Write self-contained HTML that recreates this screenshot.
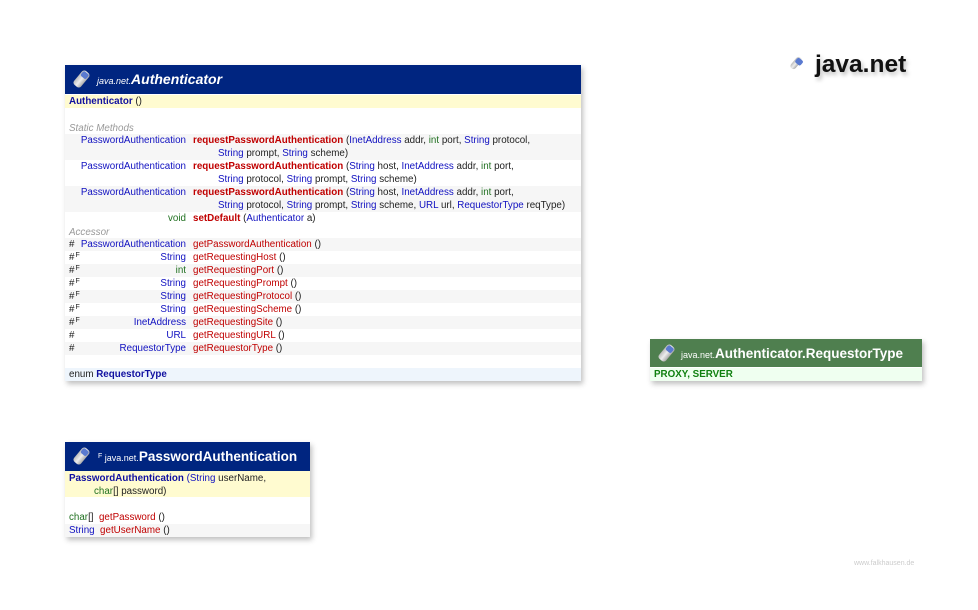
<!DOCTYPE html>
<html><head><meta charset="utf-8"><style>
body{margin:0;width:978px;height:610px;background:#fff;position:relative;overflow:hidden;font-family:"Liberation Sans",sans-serif;font-size:9.8px;color:#222}
.box{position:absolute;background:#fff;box-shadow:2px 3px 5px rgba(0,0,0,.25)}
.hd{position:absolute;left:0;right:0;top:0;color:#fff}
.r{position:absolute;left:0;right:0;height:13px;line-height:13px;white-space:nowrap}
.t{position:absolute;white-space:nowrap;line-height:13px}
.b{color:#1010c0}.g{color:#207020}.m{color:#c00000}.mb{color:#c00000;font-weight:bold}
.k{color:#1010a0;font-weight:bold}
.lab{color:#999;font-style:italic}
.gr{background:#f6f6f6}
.f{font-size:7px;position:relative;top:-3px;margin-left:1px}
.ic{position:absolute;width:9px;height:18px;border-radius:3px;background:linear-gradient(90deg,#bbb,#eee,#aaa);transform:rotate(40deg)}
.ic:after{content:"";position:absolute;left:1px;top:1px;width:7px;height:6px;border-radius:2px;background:#5a7ad0}
</style></head><body>

<div style="position:absolute;left:793px;top:56px;"><div class="ic" style="left:0;top:0;width:6px;height:14px"></div></div>
<div style="position:absolute;left:815px;top:51px;font-size:24.5px;font-weight:bold;color:#111;text-shadow:2px 3px 4px rgba(0,0,0,.25)">java.net</div>

<!-- Authenticator -->
<div class="box" style="left:65px;top:65px;width:516px;height:316px">
 <div class="hd" style="height:29px;background:#002580">
  <div class="ic" style="left:12px;top:5px"></div>
  <div class="t" style="left:32px;top:8px;font-style:italic;font-size:9px">java.net.<span style="font-size:14px;font-weight:bold">Authenticator</span></div>
 </div>
 <div class="r" style="top:30px;background:#fffbd0;padding-left:4px"><span class="k">Authenticator</span> ()</div>
 <div class="r lab" style="top:57px;padding-left:4px">Static Methods</div>
 <div class="r gr" style="top:69px;height:26px"></div>
 <div class="r gr" style="top:121px;height:26px"></div>

 <div class="t b" style="right:395px;top:69px">PasswordAuthentication</div>
 <div class="t" style="left:128px;top:69px"><span class="mb">requestPasswordAuthentication</span> (<span class="b">InetAddress</span> addr, <span class="g">int</span> port, <span class="b">String</span> protocol,</div>
 <div class="t" style="left:153px;top:82px"><span class="b">String</span> prompt, <span class="b">String</span> scheme)</div>

 <div class="t b" style="right:395px;top:95px">PasswordAuthentication</div>
 <div class="t" style="left:128px;top:95px"><span class="mb">requestPasswordAuthentication</span> (<span class="b">String</span> host, <span class="b">InetAddress</span> addr, <span class="g">int</span> port,</div>
 <div class="t" style="left:153px;top:108px"><span class="b">String</span> protocol, <span class="b">String</span> prompt, <span class="b">String</span> scheme)</div>

 <div class="t b" style="right:395px;top:121px">PasswordAuthentication</div>
 <div class="t" style="left:128px;top:121px"><span class="mb">requestPasswordAuthentication</span> (<span class="b">String</span> host, <span class="b">InetAddress</span> addr, <span class="g">int</span> port,</div>
 <div class="t" style="left:153px;top:134px"><span class="b">String</span> protocol, <span class="b">String</span> prompt, <span class="b">String</span> scheme, <span class="b">URL</span> url, <span class="b">RequestorType</span> reqType)</div>

 <div class="t g" style="right:395px;top:147px">void</div>
 <div class="t" style="left:128px;top:147px"><span class="mb">setDefault</span> (<span class="b">Authenticator</span> a)</div>

 <div class="r lab" style="top:161px;padding-left:4px">Accessor</div>
 <div class="r gr" style="top:173px"></div>
 <div class="r gr" style="top:199px"></div>
 <div class="r gr" style="top:225px"></div>
 <div class="r gr" style="top:251px"></div>
 <div class="r gr" style="top:277px"></div>

 <div class="t" style="left:4px;top:173px">#</div><div class="t b" style="right:395px;top:173px">PasswordAuthentication</div><div class="t m" style="left:128px;top:173px">getPasswordAuthentication <span style="color:#222">()</span></div>
 <div class="t" style="left:4px;top:186px">#<span class="f">F</span></div><div class="t b" style="right:395px;top:186px">String</div><div class="t m" style="left:128px;top:186px">getRequestingHost <span style="color:#222">()</span></div>
 <div class="t" style="left:4px;top:199px">#<span class="f">F</span></div><div class="t g" style="right:395px;top:199px">int</div><div class="t m" style="left:128px;top:199px">getRequestingPort <span style="color:#222">()</span></div>
 <div class="t" style="left:4px;top:212px">#<span class="f">F</span></div><div class="t b" style="right:395px;top:212px">String</div><div class="t m" style="left:128px;top:212px">getRequestingPrompt <span style="color:#222">()</span></div>
 <div class="t" style="left:4px;top:225px">#<span class="f">F</span></div><div class="t b" style="right:395px;top:225px">String</div><div class="t m" style="left:128px;top:225px">getRequestingProtocol <span style="color:#222">()</span></div>
 <div class="t" style="left:4px;top:238px">#<span class="f">F</span></div><div class="t b" style="right:395px;top:238px">String</div><div class="t m" style="left:128px;top:238px">getRequestingScheme <span style="color:#222">()</span></div>
 <div class="t" style="left:4px;top:251px">#<span class="f">F</span></div><div class="t b" style="right:395px;top:251px">InetAddress</div><div class="t m" style="left:128px;top:251px">getRequestingSite <span style="color:#222">()</span></div>
 <div class="t" style="left:4px;top:264px">#</div><div class="t b" style="right:395px;top:264px">URL</div><div class="t m" style="left:128px;top:264px">getRequestingURL <span style="color:#222">()</span></div>
 <div class="t" style="left:4px;top:277px">#</div><div class="t b" style="right:395px;top:277px">RequestorType</div><div class="t m" style="left:128px;top:277px">getRequestorType <span style="color:#222">()</span></div>

 <div class="r" style="top:303px;background:#eef5fc;padding-left:4px">enum <span class="k">RequestorType</span></div>
</div>

<!-- RequestorType -->
<div class="box" style="left:650px;top:339px;width:272px;height:42px">
 <div class="hd" style="height:28px;background:#4f7f4f">
  <div class="ic" style="left:12px;top:5px"></div>
  <div class="t" style="left:31px;top:8px;font-size:9px">java.net.<span style="font-size:13.5px;font-weight:bold">Authenticator.RequestorType</span></div>
 </div>
 <div class="r" style="top:29px;background:#effff0;padding-left:4px;color:#108010;font-weight:bold">PROXY, SERVER</div>
</div>

<!-- PasswordAuthentication -->
<div class="box" style="left:65px;top:442px;width:245px;height:95px">
 <div class="hd" style="height:29px;background:#002580">
  <div class="ic" style="left:12px;top:5px"></div>
  <div class="t" style="left:32px;top:8px;font-size:9px"><span class="f">F</span> java.net.<span style="font-size:13.5px;font-weight:bold">PasswordAuthentication</span></div>
 </div>
 <div class="r" style="top:29px;height:26px;background:#fffbd0"></div>
 <div class="t" style="left:4px;top:30px"><span class="k">PasswordAuthentication</span> <span class="b">(String</span> userName,</div>
 <div class="t" style="left:29px;top:43px"><span class="g">char</span>[] password)</div>
 <div class="t" style="left:4px;top:69px"><span class="g">char</span>[]&nbsp; <span class="m">getPassword</span> ()</div>
 <div class="r gr" style="top:82px"></div>
 <div class="t" style="left:4px;top:82px"><span class="b">String</span>&nbsp; <span class="m">getUserName</span> ()</div>
</div>

<div style="position:absolute;left:854px;top:560px;font-size:7px;color:#ccc">www.falkhausen.de</div>
</body></html>
